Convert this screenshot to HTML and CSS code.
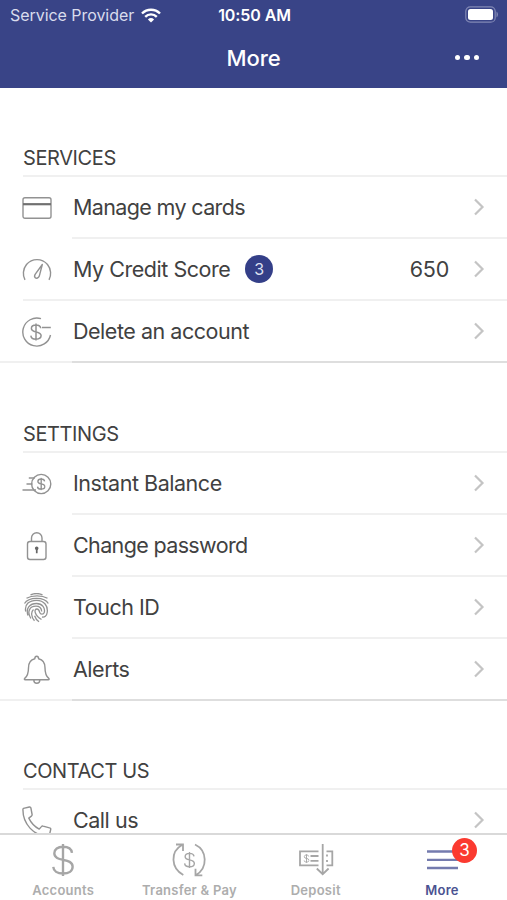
FILE: index.html
```html
<!DOCTYPE html>
<html lang="en">
<head>
  <meta charset="utf-8">
  <title>More</title>
  <link rel="stylesheet" href="styles.css">
</head>
<body>
  <svg class="sprite" aria-hidden="true">
    <symbol id="chevron" viewBox="0 0 12 20"><path d="M2 2.5l7.5 7.5L2 17.5"/></symbol>
    <symbol id="dollar" viewBox="0 0 24 36"><path d="M12 1v34M21.5 10.5c-.5-4-4-6.500-9.500-6.500-5.500 0-9.200 2.700-9.200 6.900 0 9.800 19.400 4 19.400 14.300 0 4.400-4 7.100-10.200 7.100-6 0-10-2.700-10.300-7.100"/></symbol>
  </svg>
  <div class="app">
    <header class="header">
      <div class="status-bar">
        <div class="carrier">
          <span>Service Provider</span>
          <svg class="wifi" viewBox="0 0 20 15"><path d="M1 5.500a12.800 12.800 0 0 1 18 0M4.200 8.800a8.200 8.200 0 0 1 11.600 0"/><path class="solid" d="M10 14.500l-3.100-3.100a4.500 4.500 0 0 1 6.200 0z"/></svg>
        </div>
        <span class="time">10:50 AM</span>
        <svg class="battery" viewBox="0 0 34 17"><rect class="shell" x=".8" y=".8" width="29.400" height="15.400" rx="4.500"/><rect class="solid" x="3" y="3" width="25" height="11" rx="2.500"/><path class="tip" d="M31.500 5.500v6q1.500-1 1.500-3t-1.500-3z"/></svg>
      </div>
      <div class="nav-bar">
        <h1>More</h1>
        <div class="dots"><i></i><i></i><i></i></div>
      </div>
    </header>

    <main class="content">
      <section class="section services">
        <h2>SERVICES</h2>
        <ul>
          <li class="row">
            <svg class="icon" viewBox="0 0 30 30"><rect x="1" y="4.800" width="28" height="20.500" rx="2"/><path class="thick" d="M1 11.200h28"/></svg>
            <div class="row-body"><span class="label tight">Manage my cards</span><svg class="chevron"><use href="#chevron"/></svg></div>
          </li>
          <li class="row inset">
            <svg class="icon" viewBox="0 0 30 30"><path d="M3 24.800C.500 20.500.800 14 4.500 9.500c5.500-6.500 15.500-6.500 21 0 3.700 4.500 4 11 1.500 15.300M20.300 9.500l-7 9.600c-2 3 .800 5.500 3.200 3.200.8-.8 1-2 1.300-3.200z"/></svg>
            <div class="row-body"><span class="label">My Credit Score</span><span class="count">3</span><span class="value">650</span><svg class="chevron"><use href="#chevron"/></svg></div>
          </li>
          <li class="row">
            <svg class="icon" viewBox="0 0 30 30"><path d="M19 1.700A14 14 0 1 0 28.500 18M20 10.500h8.800"/><use class="coin" href="#dollar" x="8" y="6" width="12" height="18"/></svg>
            <div class="row-body"><span class="label">Delete an account</span><svg class="chevron"><use href="#chevron"/></svg></div>
          </li>
        </ul>
      </section>

      <section class="section settings">
        <h2>SETTINGS</h2>
        <ul>
          <li class="row">
            <svg class="icon" viewBox="0 0 30 30"><circle cx="19.200" cy="15" r="9.600"/><path d="M6.800 9h6M4.500 15h6M.500 21h13.500"/><use class="coin small" href="#dollar" x="14.700" y="8.500" width="9" height="13"/></svg>
            <div class="row-body"><span class="label">Instant Balance</span><svg class="chevron"><use href="#chevron"/></svg></div>
          </li>
          <li class="row">
            <svg class="icon" viewBox="0 0 30 30"><rect x="5.500" y="10.500" width="18.500" height="18" rx="2.500"/><path d="M9.500 10.500V7a5.200 5.200 0 0 1 10.500 0v3.500"/><path class="keyhole" d="M13 17.800a1.800 1.800 0 1 1 3.400 0l-.8 1.500v3h-1.700v-3z"/></svg>
            <div class="row-body"><span class="label tight">Change password</span><svg class="chevron"><use href="#chevron"/></svg></div>
          </li>
          <li class="row">
            <svg class="icon finger" viewBox="0 0 30 30"><path d="M8.500 1.800c3.600-1.500 8.500-1.500 12 0M4.500 5.300c5.500-3.300 15.500-3.300 21 0M2.500 10.500C6.500 3.700 22.500 3.500 26.300 10.500M3.700 18.500c-1.500-7.500 4-11.200 10.800-11.200 7.700 0 11.700 5.700 10.700 12.200-.4 3.500-2.700 5-5.200 4.500M6 22.500c-2.500-7.500 2-12 8.500-12 6 0 8.800 4.500 7.800 8.800-.6 2.500-4 2.500-4.600 0-.5-2-.9-3.300-2.700-3.300-3.500 0-2.500 6.500 4.500 10.500M8.800 25.500c-4-6.500-1.500-12.300 5.200-12.300 3.700 0 5.500 2.600 5.700 5.300M12.500 27.800c-3.500-4-3.700-9-1-11.300M17 28.700c-2.200-1.500-3.700-3.700-4.400-6"/></svg>
            <div class="row-body"><span class="label">Touch ID</span><svg class="chevron"><use href="#chevron"/></svg></div>
          </li>
          <li class="row">
            <svg class="icon" viewBox="0 0 30 30"><path d="M12.800 3.700c.1-3.200 3.700-3.200 3.800 0 4.600 1.100 6.400 4.500 6.400 9 0 6.300 1 8.500 3.800 10.700.7.700.4 1.400-.5 1.400H3.200c-.9 0-1.200-.7-.5-1.400 2.800-2.200 3.800-4.400 3.800-10.700 0-4.500 1.800-7.900 6.300-9zM11.800 25c0 4.400 6 4.400 6 0"/></svg>
            <div class="row-body"><span class="label">Alerts</span><svg class="chevron"><use href="#chevron"/></svg></div>
          </li>
        </ul>
      </section>

      <section class="section contact">
        <h2>CONTACT US</h2>
        <ul>
          <li class="row">
            <svg class="icon" viewBox="0 0 30 30"><path d="M1.500 2.400L7.300 1c.8-.2 1.400.2 1.600 1l1.200 6.500c.1.700-.1 1.200-.7 1.600l-2.600 2c2.200 4.600 5.600 8.400 10.400 11l2.200-2.500c.5-.6 1.100-.7 1.700-.5l6.500 1.800c.9.200 1.300.8 1.100 1.600l-1.300 5.600c-.2.700-.7 1-1.500 1C11.500 29.800.900 18 .900 3.600c0-.6.200-1 .6-1.200z"/></svg>
            <div class="row-body"><span class="label">Call us</span><svg class="chevron"><use href="#chevron"/></svg></div>
          </li>
        </ul>
      </section>
    </main>

    <nav class="tab-bar">
      <div class="tab">
        <svg class="tab-icon" viewBox="0 0 36 36"><use class="big-dollar" href="#dollar" x="6" y="1" width="24" height="34"/></svg>
        <span>Accounts</span>
      </div>
      <div class="tab">
        <svg class="tab-icon" viewBox="0 0 36 36"><path d="M12.300 33C-.500 26-.700 9.500 11 3M5 2.500h7v6.500M24 2.500C36.500 8.500 37 26 25 33M31.300 33.300h-6.800v-6.500"/><use class="coin" href="#dollar" x="12.500" y="9.500" width="12" height="17"/></svg>
        <span>Transfer &amp; Pay</span>
      </div>
      <div class="tab">
        <svg class="tab-icon" viewBox="0 0 36 36"><path d="M20.500 9.300H2v14h18.500M28.500 9.300h5.800v14h-5.800M12.500 14h8M12.500 18.800h8M29 12.500v2M29 18v2M24.700 2v30M18.800 26.500l5.900 5.700 5.900-5.700"/><use class="coin small" href="#dollar" x="5.500" y="11.500" width="6" height="10"/></svg>
        <span>Deposit</span>
      </div>
      <div class="tab active">
        <svg class="tab-icon" viewBox="0 0 36 36"><path d="M3 9.500h31M3 17.800h31M3 26h31"/></svg>
        <span class="badge">3</span>
        <span>More</span>
      </div>
    </nav>
  </div>
</body>
</html>
```

FILE: styles.css
```css
* {
  box-sizing: border-box;
}

body {
  margin: 0;
  font-family: Inter, "Liberation Sans", sans-serif;
  color: #414141;
  background-color: #fff;
}

ul {
  list-style: none;
  margin: 0;
  padding: 0;
}

svg {
  display: block;
  fill: none;
  flex-shrink: 0;
}

.sprite {
  display: none;
}

.app {
  display: flex;
  flex-direction: column;
  height: 900px;
  overflow: hidden;
}

/* Header */
.header {
  flex: none;
  height: 88px;
  color: #fff;
  background-color: #394487;
}

.status-bar {
  display: grid;
  grid-template-columns: 1fr auto 1fr;
  align-items: center;
  height: 30px;
  padding: 0 8px 0 10px;
  font-size: 16px;
}

.carrier {
  display: flex;
  align-items: center;
  gap: 7px;
  color: #d9dced;
  letter-spacing: -0.05px;
}

.wifi {
  width: 20px;
  height: 15px;
  stroke: #fff;
  stroke-width: 2.4;
}

.solid {
  fill: #fff;
  stroke: none;
}

.time {
  font-weight: 600;
  letter-spacing: -0.1px;
}

.battery {
  width: 34px;
  height: 17px;
  margin-bottom: 2px;
  justify-self: end;
}

.shell {
  stroke: #8188b5;
  stroke-width: 1.2;
}

.tip {
  fill: #8188b5;
}

.nav-bar {
  display: grid;
  grid-template-columns: 1fr auto 1fr;
  align-items: center;
  height: 55px;
  padding: 0 28px;
}

.nav-bar h1 {
  grid-column: 2;
  margin: 0;
  font-size: 22px;
  font-weight: 500;
  letter-spacing: -0.1px;
}

.dots {
  display: flex;
  justify-content: flex-end;
  gap: 4px;
}

.dots i {
  width: 5.5px;
  height: 5.5px;
  border-radius: 50%;
  background-color: #fff;
}

/* Lists */
.content {
  flex: 1;
  min-height: 0;
  overflow: hidden;
}

.section h2 {
  display: flex;
  align-items: flex-end;
  height: 89px;
  margin: 0 0 0 23px;
  padding-bottom: 6px;
  border-bottom: 2px solid #f0f0f0;
  font-size: 20px;
  line-height: 22px;
  font-weight: 400;
  letter-spacing: -0.4px;
}

.settings h2 {
  height: 90px;
}

.row {
  display: flex;
  align-items: center;
  height: 62px;
  padding-left: 22px;
}

.icon {
  width: 30px;
  height: 30px;
  stroke: #929292;
  stroke-width: 1.4;
  stroke-linejoin: round;
}

.thick {
  stroke: #707070;
  stroke-width: 2.2;
}

.coin {
  stroke-width: 3;
}

.coin.small {
  stroke-width: 3.8;
}

.keyhole {
  fill: #666;
  stroke: none;
}

.finger {
  stroke-width: 1.3;
}

.row-body {
  display: flex;
  align-items: center;
  flex: 1;
  height: 62px;
  margin-left: 20px;
  padding: 0 22px 0 1px;
  border-bottom: 2px solid #f0f0f0;
  font-size: 21.5px;
}

.label {
  letter-spacing: -0.47px;
}

.label.tight {
  letter-spacing: -0.64px;
}

.row.inset {
  background: linear-gradient(#f0f0f0, #f0f0f0) 23px 100% / 100% 2px no-repeat;
}

.row:last-child {
  background: linear-gradient(#f0f0f0, #f0f0f0) 0 100% / 100% 2px no-repeat;
}

.row:last-child .row-body {
  border-bottom-color: #dedede;
}

.chevron {
  width: 12px;
  height: 20px;
  margin-left: auto;
  stroke: #c4c4c4;
  stroke-width: 2.2;
}

.count {
  width: 28px;
  height: 28px;
  margin-left: 15px;
  border-radius: 50%;
  background-color: #343f88;
  color: #dfe1f0;
  font-size: 16px;
  line-height: 28px;
  text-align: center;
}

.value {
  margin-left: auto;
  letter-spacing: -0.2px;
}

.value + .chevron {
  margin-left: 24px;
}

/* Tab bar */
.tab-bar {
  display: grid;
  grid-template-columns: repeat(4, 126.3px);
  flex: none;
  height: 67px;
  border-top: 2px solid #d9d9d9;
  background-color: #fff;
}

.tab {
  position: relative;
  display: flex;
  flex-direction: column;
  align-items: center;
  padding-top: 7px;
  color: #adadad;
  font-size: 13px;
  font-weight: 600;
  line-height: 16px;
  letter-spacing: 0.25px;
}

.tab-icon {
  width: 36px;
  height: 36px;
  margin-bottom: 4px;
  stroke: #a6a6a6;
  stroke-width: 1.8;
}

.big-dollar {
  stroke-width: 2.5;
}

.tab.active {
  color: #4a5291;
}

.active .tab-icon {
  stroke: #747bae;
  stroke-width: 2.3;
}

.badge {
  position: absolute;
  top: 3px;
  left: 73px;
  width: 25px;
  height: 25px;
  border-radius: 50%;
  background-color: #fb3a30;
  color: #fff;
  font-size: 17px;
  font-weight: 400;
  line-height: 25px;
  letter-spacing: 0;
  text-align: center;
}
```
